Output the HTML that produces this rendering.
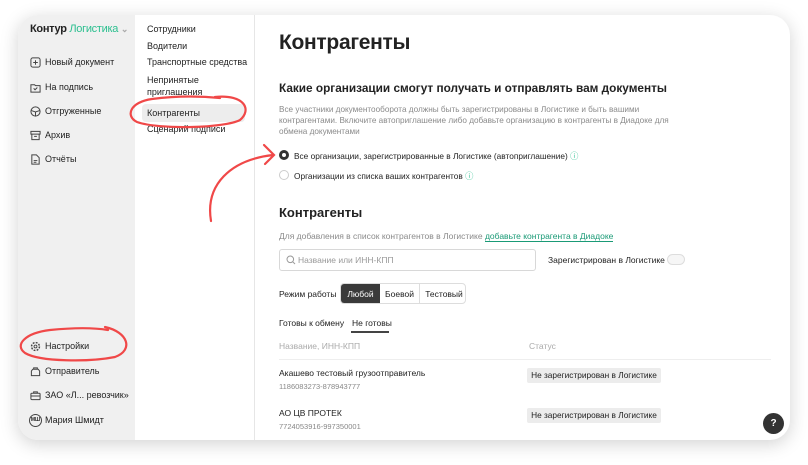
<!DOCTYPE html>
<html><head><meta charset="utf-8">
<style>
*{margin:0;padding:0;box-sizing:border-box}
body{width:808px;height:465px;background:#fff;font-family:"Liberation Sans","Noto Sans CJK SC",sans-serif;position:relative;overflow:hidden;color:#222}
.card{position:absolute;left:18px;top:15px;width:772px;height:425px;border-radius:20px;background:#fff;box-shadow:0 4px 18px rgba(0,0,0,.18);overflow:hidden}
.side{position:absolute;left:0;top:0;width:117px;height:425px;background:#f0f0f0}
.sub{position:absolute;left:117px;top:0;width:120px;height:425px;background:#fff;border-right:1px solid #e6e6e6}
.a{position:absolute;font-size:9px;white-space:nowrap}
.ic{position:absolute;width:11px;height:11px}
.gray{color:#8a8a8a}
</style></head><body>
<div class="card">
 <div class="side">
  <div class="a" style="left:12px;top:8px;font-size:11px;font-weight:bold;letter-spacing:-.3px">Контур <span style="color:#2bbf8f;font-weight:normal">Логистика</span> <span style="color:#aaa;font-size:9px">⌄</span></div>
  <svg class="ic" style="left:12px;top:42px" viewBox="0 0 12 12"><rect x="1" y="1" width="10" height="10" rx="2" fill="none" stroke="#444" stroke-width="1.1"/><path d="M6 3.5v5M3.5 6h5" stroke="#444" stroke-width="1.1"/></svg>
  <div class="a" style="left:27px;top:42px">Новый документ</div>
  <svg class="ic" style="left:12px;top:67px" viewBox="0 0 12 12"><path d="M1 3h4l1 1h5v7H1z" fill="none" stroke="#444" stroke-width="1.1"/><path d="M4 7l1.5 1.5L8 6" fill="none" stroke="#444" stroke-width="1.1"/></svg>
  <div class="a" style="left:27px;top:67px">На подпись</div>
  <svg class="ic" style="left:12px;top:91px" viewBox="0 0 12 12"><circle cx="6" cy="6" r="5" fill="none" stroke="#444" stroke-width="1.1"/><path d="M1.5 5l4.5 1.5L10.5 5M6 6.5V11" fill="none" stroke="#444" stroke-width="1.1"/></svg>
  <div class="a" style="left:27px;top:91px">Отгруженные</div>
  <svg class="ic" style="left:12px;top:115px" viewBox="0 0 12 12"><rect x="1" y="1.5" width="10" height="3" fill="none" stroke="#444" stroke-width="1.1"/><path d="M2 4.5v6h8v-6M4.5 7h3" fill="none" stroke="#444" stroke-width="1.1"/></svg>
  <div class="a" style="left:27px;top:115px">Архив</div>
  <svg class="ic" style="left:12px;top:139px" viewBox="0 0 12 12"><path d="M2 1h5l3 3v7H2z" fill="none" stroke="#444" stroke-width="1.1"/><path d="M4 7h4M4 9h3" stroke="#444" stroke-width="1"/></svg>
  <div class="a" style="left:27px;top:139px">Отчёты</div>
  <svg class="ic" style="left:12px;top:326px" viewBox="0 0 12 12"><circle cx="6" cy="6" r="4.3" fill="none" stroke="#444" stroke-width="1.6" stroke-dasharray="2 1.4"/><circle cx="6" cy="6" r="1.6" fill="none" stroke="#444" stroke-width="1"/></svg>
  <div class="a" style="left:27px;top:326px">Настройки</div>
  <svg class="ic" style="left:12px;top:351px" viewBox="0 0 12 12"><path d="M3 3.5h6l1.5 2v5h-9v-5z M4 3.5V2h4v1.5" fill="none" stroke="#444" stroke-width="1.1"/></svg>
  <div class="a" style="left:27px;top:351px">Отправитель</div>
  <svg class="ic" style="left:12px;top:375px" viewBox="0 0 12 12"><rect x="1" y="3.5" width="10" height="7" rx="1" fill="none" stroke="#444" stroke-width="1.1"/><path d="M4 3.5V2h4v1.5M1 6.5h10" fill="none" stroke="#444" stroke-width="1.1"/></svg>
  <div class="a" style="left:27px;top:375px">ЗАО «Л... ревозчик»</div>
  <div style="position:absolute;left:11px;top:399px;width:13px;height:13px;border:1px solid #444;border-radius:50%;font-size:5px;font-weight:bold;text-align:center;line-height:11px">МШ</div>
  <div class="a" style="left:27px;top:400px">Мария Шмидт</div>
 </div>
 <div class="sub">
  <div class="a" style="left:12px;top:9px">Сотрудники</div>
  <div class="a" style="left:12px;top:26px">Водители</div>
  <div class="a" style="left:12px;top:42px">Транспортные средства</div>
  <div class="a" style="left:12px;top:59px;line-height:12px">Непринятые<br>приглашения</div>
  <div style="position:absolute;left:7px;top:89px;width:103px;height:18px;background:#ededed;border-radius:4px"></div>
  <div class="a" style="left:12px;top:93px">Контрагенты</div>
  <div class="a" style="left:12px;top:109px">Сценарий подписи</div>
 </div>
 <div class="main">
  <div class="a" style="left:261px;top:16px;font-size:21px;font-weight:bold;letter-spacing:-.3px">Контрагенты</div>
  <div class="a" style="left:261px;top:66px;font-size:11.8px;font-weight:bold">Какие организации смогут получать и отправлять вам документы</div>
  <div class="a gray" style="left:261px;top:89px;font-size:8.2px;line-height:11px;white-space:normal;width:400px">Все участники документооборота должны быть зарегистрированы в Логистике и быть вашими контрагентами. Включите автоприглашение либо добавьте организацию в контрагенты в Диадоке для обмена документами</div>
  <div style="position:absolute;left:261px;top:135px;width:10px;height:10px;border-radius:50%;border:3px solid #333"></div>
  <div class="a" style="left:276px;top:135px;font-size:8.3px">Все организации, зарегистрированные в Логистике (автоприглашение) <span style="color:#2bbf8f">ⓘ</span></div>
  <div style="position:absolute;left:261px;top:155px;width:10px;height:10px;border-radius:50%;border:1px solid #ccc"></div>
  <div class="a" style="left:276px;top:155px;font-size:8.3px">Организации из списка ваших контрагентов <span style="color:#2bbf8f">ⓘ</span></div>
  <div class="a" style="left:261px;top:190px;font-size:13px;font-weight:bold">Контрагенты</div>
  <div class="a gray" style="left:261px;top:216px;font-size:8.5px">Для добавления в список контрагентов в Логистике <span style="color:#1a9a76;border-bottom:1px solid #1a9a76">добавьте контрагента в Диадоке</span></div>
  <div style="position:absolute;left:261px;top:234px;width:257px;height:22px;border:1px solid #d8d8d8;border-radius:3px"></div>
  <svg style="position:absolute;left:268px;top:240px" width="10" height="10" viewBox="0 0 10 10"><circle cx="4.3" cy="4.3" r="3.3" fill="none" stroke="#999" stroke-width="1"/><path d="M6.8 6.8L9 9" stroke="#999"/></svg>
  <div class="a" style="left:280px;top:240px;font-size:8.5px;color:#999">Название или ИНН-КПП</div>
  <div class="a" style="left:530px;top:240px;font-size:8.5px">Зарегистрирован в Логистике</div>
  <div style="position:absolute;left:649px;top:239px;width:18px;height:11px;border-radius:6px;border:1px solid #ddd;background:#f6f6f6"></div>
  <div class="a" style="left:261px;top:274px;font-size:8.5px">Режим работы</div>
  <div style="position:absolute;left:322px;top:268px;width:126px;height:21px;border:1px solid #ddd;border-radius:4px;overflow:hidden">
   <div style="position:absolute;left:0;top:0;width:39px;height:21px;background:#3a3a3a;color:#fff;font-size:8.5px;text-align:center;line-height:20px">Любой</div>
   <div style="position:absolute;left:39px;top:0;width:40px;height:21px;border-right:1px solid #ddd;font-size:8.5px;text-align:center;line-height:20px">Боевой</div>
   <div style="position:absolute;left:80px;top:0;width:46px;height:21px;font-size:8.5px;text-align:center;line-height:20px">Тестовый</div>
  </div>
  <div class="a" style="left:261px;top:303px;font-size:8.5px">Готовы к обмену</div>
  <div class="a" style="left:334px;top:303px;font-size:8.5px">Не готовы</div>
  <div style="position:absolute;left:333px;top:316px;width:38px;height:1.5px;background:#444"></div>
  <div class="a" style="left:261px;top:326px;font-size:8.5px;color:#aaa">Название, ИНН-КПП</div>
  <div class="a" style="left:511px;top:326px;font-size:8.5px;color:#aaa">Статус</div>
  <div style="position:absolute;left:261px;top:344px;width:492px;height:1px;background:#eee"></div>
  <div class="a" style="left:261px;top:353px;font-size:8.5px">Акашево тестовый грузоотправитель</div>
  <div class="a" style="left:261px;top:367px;font-size:7.5px;color:#888">1186083273-878943777</div>
  <div style="position:absolute;left:509px;top:353px;width:134px;height:15px;background:#ececec;border-radius:2px;font-size:8.3px;line-height:15px;text-align:center">Не зарегистрирован в Логистике</div>
  <div class="a" style="left:261px;top:393px;font-size:8.5px">АО ЦВ ПРОТЕК</div>
  <div class="a" style="left:261px;top:407px;font-size:7.5px;color:#888">7724053916-997350001</div>
  <div style="position:absolute;left:509px;top:393px;width:134px;height:15px;background:#ececec;border-radius:2px;font-size:8.3px;line-height:15px;text-align:center">Не зарегистрирован в Логистике</div>
  <div style="position:absolute;left:745px;top:398px;width:21px;height:21px;border-radius:50%;background:#333;color:#fff;font-size:10px;font-weight:bold;text-align:center;line-height:21px">?</div>
 </div>
</div>
<svg style="position:absolute;left:0;top:0" width="808" height="465" viewBox="0 0 808 465">
 <g fill="none" stroke="#f04848" stroke-width="2.2" stroke-linecap="round">
  <path d="M215 97 C245 94 252 110 240 120 C225 128 160 130 137 122 C125 116 130 102 152 99 C175 96 200 96 220 98"/>
  <path d="M105 327 C128 332 134 350 115 357 C90 362 40 362 25 353 C14 345 25 333 50 330 C70 328 90 327 108 330"/>
  <path d="M211 221 C205 185 230 160 273 155"/>
  <path d="M264 145 L274 155 L265 164"/>
 </g>
</svg>
</body></html>
